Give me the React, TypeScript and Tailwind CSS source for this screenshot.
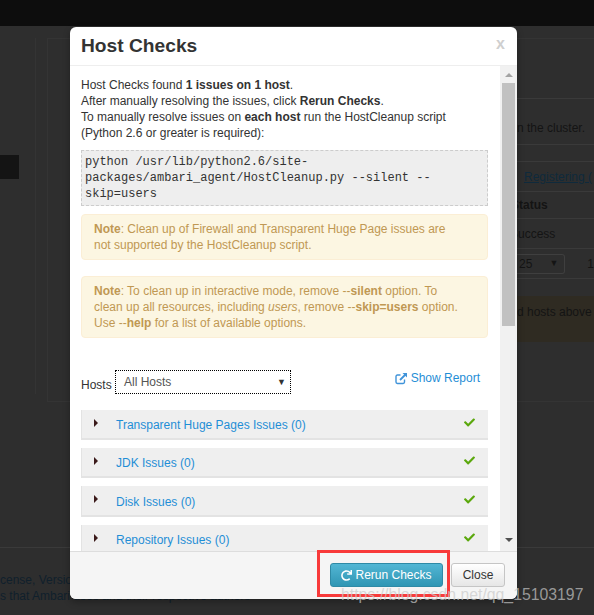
import { FaCheck, FaRedo } from "react-icons/fa";

const issues = [
  { name: "Transparent Huge Pages Issues (0)", height: "h-[30px]" },
  { name: "JDK Issues (0)", height: "h-[30px]" },
  { name: "Disk Issues (0)", height: "h-[31px]" },
  { name: "Repository Issues (0)", height: "h-[30px]" },
];

function Backdrop() {
  return (
    <div className="flex h-full flex-col bg-[#2e2e2e] text-[12px] text-[#141414]">
      <div className="h-[26px] shrink-0 bg-[#0d0d0d]" />
      <div className="flex h-[522px] shrink-0 border-b border-[#3a3a3a]">
        <div className="mt-[12px] h-[356px] w-[36px] shrink-0 border-r border-[#343434]">
          <div className="mt-[117px] h-[24px] w-[19px] bg-[#141414]" />
        </div>
        <div className="ml-[11px] mt-[12px] flex h-[364px] flex-1 flex-col items-end border-t border-l border-b border-[#343434]">
          <div className="w-[77px]">
            <div className="h-[60px] border-b border-[#3a3a3a]" />
            <div className="flex h-[46px] items-end whitespace-nowrap border-b border-[#3a3a3a] pb-[7px]">
              n the cluster.
            </div>
            <div className="h-[17px] border-b border-[#3a3a3a]" />
            <div className="flex h-[30px] items-center whitespace-nowrap border-b border-[#3a3a3a] pl-[7px] text-[#0f2a3c] underline">
              Registering (
            </div>
            <div className="flex h-[27px] items-center border-b border-[#3a3a3a] font-bold">
              <span className="ml-[-6px]">Status</span>
            </div>
            <div className="flex h-[30px] items-center border-b border-[#3a3a3a]">
              <span className="ml-[-7px]">Success</span>
            </div>
            <div className="flex h-[30px] items-center gap-[22px] border-b border-[#3a3a3a]">
              <div className="flex h-[20px] w-[49px] items-center justify-between rounded-r-[3px] border-y border-r border-[#3f3f3f] pl-[2px] pr-[6px]">
                <span>25</span>
                <span className="text-[9px]">▼</span>
              </div>
              <span>1</span>
            </div>
            <div className="mt-[17px] flex h-[46px] items-start whitespace-nowrap bg-[#2f2b22] pt-[7px]">
              d hosts above
            </div>
          </div>
        </div>
      </div>
      <div className="mt-[24px] leading-[16px] text-[#10202c]">
        <div>cense, Version</div>
        <div className="whitespace-nowrap">s that Ambari uses and their respective authors</div>
      </div>
    </div>
  );
}

function Note({ children }: { children: React.ReactNode }) {
  return (
    <div className="rounded-[4px] border border-[#fbeed5] bg-[#fcf6e2] py-[6px] pl-[12px] pr-[12px] text-[#c09853]">
      {children}
    </div>
  );
}

function IssueRow({ name, height }: { name: string; height: string }) {
  return (
    <div className={`flex ${height} shrink-0 items-center border-b-2 border-l border-[#e3e3e3] bg-[#efefef]`}>
      <span className="mb-[3px] ml-[12px] h-0 w-0 border-y-[4px] border-l-[4px] border-y-transparent border-l-[#3b1a1a]" />
      <span className="ml-[18px] mt-[2px] flex-1 text-[#1f8ed6]">{name}</span>
      <FaCheck className="mb-[3px] mr-[13px] text-[11px] text-[#5ba80d]" />
    </div>
  );
}

function Scrollbar() {
  return (
    <div className="flex w-[17px] shrink-0 flex-col items-center bg-[#f1f1f1]">
      <span className="mt-[7px] h-0 w-0 border-x-[4px] border-b-[4px] border-x-transparent border-b-[#a3a3a3]" />
      <div className="mt-[6px] h-[243px] w-[13px] bg-[#c1c1c1]" />
      <span className="mt-[212px] h-0 w-0 border-x-[4px] border-t-[4px] border-x-transparent border-t-[#505050]" />
    </div>
  );
}

export default function App() {
  return (
    <div
      className="relative h-[615px] w-[594px] overflow-hidden"
      style={{ fontFamily: '"Liberation Sans", Arial, sans-serif' }}
    >
      <Backdrop />

      <div className="absolute left-[70px] top-[27px] flex h-[572px] w-[447px] flex-col overflow-hidden rounded-[6px] bg-white text-[12px] leading-[16px] text-[#333] shadow-[0_3px_7px_rgba(0,0,0,0.3)]">
        <div className="flex h-[39px] shrink-0 items-center justify-between border-b border-[#eeeeee] pl-[11px] pr-[12px]">
          <h3 className="text-[19.2px] font-bold leading-[36px] text-[#333]">Host Checks</h3>
          <span className="mb-[5px] text-[16px] font-bold text-[#cfcfcf]">x</span>
        </div>

        <div className="flex h-[485px] shrink-0">
          <div className="flex-1 overflow-hidden pl-[11px] pr-[12px] pt-[11px]">
            <p>
              Host Checks found <b>1 issues on 1 host</b>.
              <br />
              After manually resolving the issues, click <b>Rerun Checks</b>.
              <br />
              To manually resolve issues on <b>each host</b> run the HostCleanup script
              <br />
              (Python 2.6 or greater is required):
            </p>
            <pre
              className="mt-[9px] whitespace-pre-wrap break-all border border-dashed border-[#cccccc] bg-[#eeeeee] py-[3px] pl-[3px] pr-[3px] text-[12px] leading-[16px] text-[#333]"
              style={{ fontFamily: '"Liberation Mono", "Courier New", monospace' }}
            >
              {"python /usr/lib/python2.6/site-\npackages/ambari_agent/HostCleanup.py --silent --\nskip=users"}
            </pre>
            <div className="mt-[8px]">
              <Note>
                <b>Note</b>: Clean up of Firewall and Transparent Huge Page issues are
                <br />
                not supported by the HostCleanup script.
              </Note>
            </div>
            <div className="mt-[16px]">
              <Note>
                <b>Note</b>: To clean up in interactive mode, remove --<b>silent</b> option. To
                <br />
                clean up all resources, including <i>users</i>, remove --<b>skip=users</b> option.
                <br />
                Use --<b>help</b> for a list of available options.
              </Note>
            </div>

            <div className="mt-[32px] flex h-[24px] items-center">
              <span className="mt-[6px] w-[34px]">Hosts</span>
              <div className="flex h-[24px] w-[176px] items-center justify-between border border-dotted border-black pl-[8px] pr-[4px] text-[#555]">
                <span>All Hosts</span>
                <span className="text-[9px] text-[#333]">▼</span>
              </div>
              <a className="ml-auto mr-[8px] mt-[-8px] flex items-center gap-[3px] text-[#1f8ed6]">
                <svg width="13" height="13" viewBox="0 0 13 13" fill="none" stroke="#3f93d9" strokeWidth="1.4">
                  <path d="M9.5 7.5v2.6a1.4 1.4 0 0 1-1.4 1.4H2.4A1.4 1.4 0 0 1 1 10.100V4.400A1.400 1.400 0 0 1 2.400 3H5.500" />
                  <path d="M5 8l6-6" strokeWidth="1.8" />
                  <path d="M7.500 1h4.500v4.500z" fill="#3f93d9" stroke="none" />
                </svg>
                Show Report
              </a>
            </div>

            <div className="mt-[16px] flex flex-col gap-[8px]">
              {issues.map((issue) => (
                <IssueRow key={issue.name} name={issue.name} height={issue.height} />
              ))}
            </div>
          </div>
          <Scrollbar />
        </div>

        <div className="flex flex-1 items-start justify-end gap-[8px] border-t border-[#dddddd] bg-[#f5f5f5] pr-[12px] pt-[11px]">
          <button className="flex h-[24px] w-[113px] items-center justify-center gap-[3px] rounded-[3px] border border-[#2f8aa6] bg-linear-to-b from-[#52b6d4] to-[#2f96b4] text-white">
            <FaRedo className="text-[11px]" />
            Rerun Checks
          </button>
          <button className="flex h-[24px] w-[54px] items-center justify-center rounded-[3px] border border-[#c5c5c5] bg-linear-to-b from-white to-[#e6e6e6] text-[#333]">
            Close
          </button>
        </div>
      </div>

      <div className="absolute left-[317px] top-[550px] h-[47px] w-[133px] border-[3px] border-[#f83a3a]" />
      <div className="absolute left-[341px] top-[586px] whitespace-nowrap text-[15.8px] leading-[18px] text-[#c9c9c9]/70">
        https://blog.csdn.net/qq_15103197
      </div>
    </div>
  );
}
